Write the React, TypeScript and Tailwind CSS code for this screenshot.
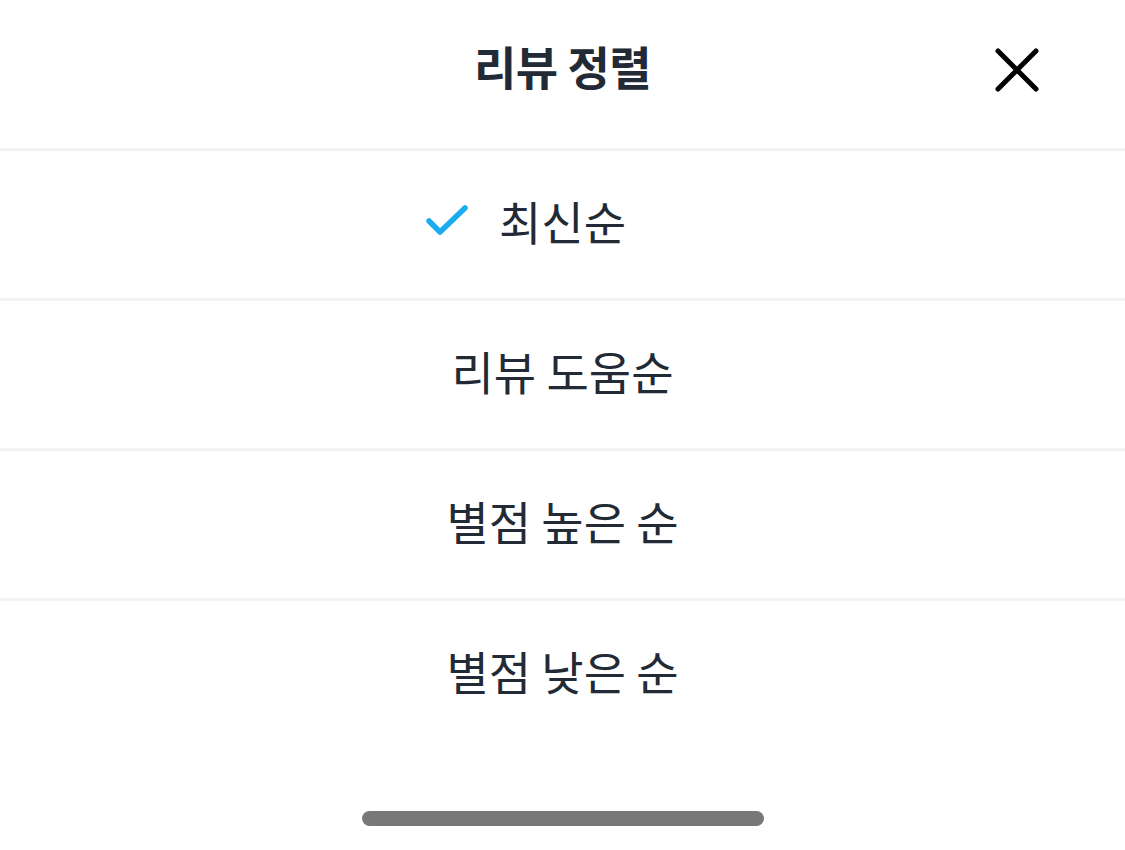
import React, { useState } from 'react';

const options = ['최신순', '리뷰 도움순', '별점 높은 순', '별점 낮은 순'];

const CheckIcon = () => (
  <svg width="44" height="34" viewBox="0 0 44 34" fill="none">
    <path d="M4 18 L15 29 L40 5" stroke="#19adf0" strokeWidth="5.5" strokeLinecap="round" strokeLinejoin="round" />
  </svg>
);

const CloseIcon = () => (
  <svg width="46" height="46" viewBox="0 0 46 46" fill="none">
    <path d="M4 4 L42 42 M42 4 L4 42" stroke="#000" strokeWidth="5" strokeLinecap="round" />
  </svg>
);

export default function App() {
  const [selected, setSelected] = useState(0);

  return (
    <div
      className="w-[1125px] h-[850px] bg-white flex flex-col text-[#222a35]"
      style={{ fontFamily: '"Noto Sans CJK KR", "Noto Sans", sans-serif' }}
    >
      {/* header */}
      <div className="relative h-[148px] flex items-center justify-center pb-[18px]">
        <h1 className="text-[46px] font-bold leading-none tracking-[-0.5px]">리뷰 정렬</h1>
        <button className="absolute right-[85px] top-[47px]">
          <CloseIcon />
        </button>
      </div>

      {options.map((label, i) => (
        <React.Fragment key={label}>
          <div className="h-[3px] bg-[#f3f3f3]" />
          <button
            onClick={() => setSelected(i)}
            className="h-[147px] flex items-center justify-center pb-[9px]"
          >
            <span className="relative text-[46px] leading-none">
              {selected === i && (
                <span className="absolute right-full mr-[30px] top-1/2 -translate-y-1/2">
                  <CheckIcon />
                </span>
              )}
              {label}
            </span>
          </button>
        </React.Fragment>
      ))}

      <div className="flex-1 flex items-end justify-center pb-[24px]">
        <div className="w-[402px] h-[15px] rounded-full bg-[#787878]" />
      </div>
    </div>
  );
}
